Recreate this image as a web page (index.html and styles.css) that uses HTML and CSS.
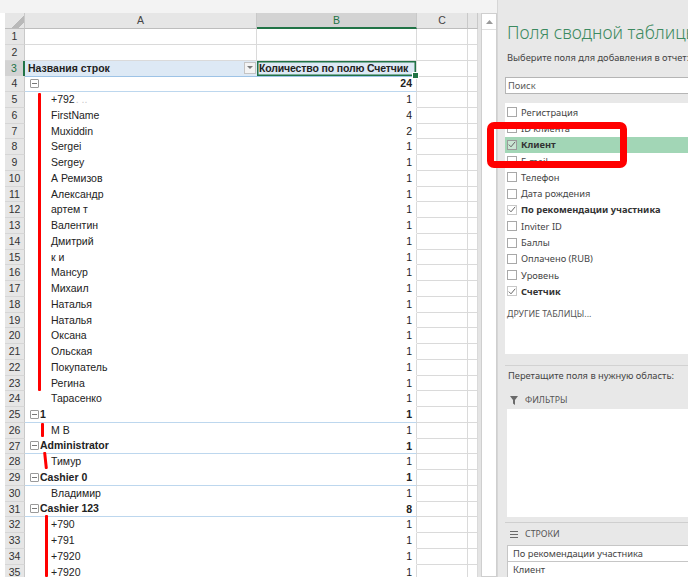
FILE: index.html
```html
<!DOCTYPE html>
<html lang="ru">
<head>
<meta charset="utf-8">
<title>Сводная таблица</title>
<link rel="stylesheet" href="styles.css">
</head>
<body>
<section class="sheet">
  <div class="topstrip"></div>
  <div class="sheetbody">
    <div class="grid">
      <div class="row hdr"><div class="corner"></div><div class="ch">A</div><div class="ch csel">B</div><div class="ch">C</div><div class="ch"></div></div>
      <div class="row"><div class="rh">1</div><div class="g"></div><div class="g"></div><div class="g"></div><div class="g"></div></div>
      <div class="row"><div class="rh">2</div><div class="g"></div><div class="g"></div><div class="g"></div><div class="g"></div></div>
      <div class="row"><div class="rh rsel">3</div><div class="pa ph">Названия строк<span class="dd"><svg width="6" height="4" viewBox="0 0 6 4"><path d="M0 0h6L3 3z" fill="#7a7a7a"/></svg></span></div><div class="pb ph bsel">Количество по полю Счетчик<span class="handle"></span></div><div class="g"></div><div class="g"></div></div>
      <div class="row"><div class="rh">4</div><div class="pa grp gl"><span class="tg"></span></div><div class="pb grp b">24</div><div class="g"></div><div class="g"></div></div>
      <div class="row"><div class="rh">5</div><div class="pa item">+792<span class="faint">. ..</span></div><div class="pb">1</div><div class="g"></div><div class="g"></div></div>
      <div class="row"><div class="rh">6</div><div class="pa item">FirstName</div><div class="pb">4</div><div class="g"></div><div class="g"></div></div>
      <div class="row"><div class="rh">7</div><div class="pa item">Muxiddin</div><div class="pb">2</div><div class="g"></div><div class="g"></div></div>
      <div class="row"><div class="rh">8</div><div class="pa item">Sergei</div><div class="pb">1</div><div class="g"></div><div class="g"></div></div>
      <div class="row"><div class="rh">9</div><div class="pa item">Sergey</div><div class="pb">1</div><div class="g"></div><div class="g"></div></div>
      <div class="row"><div class="rh">10</div><div class="pa item">А Ремизов</div><div class="pb">1</div><div class="g"></div><div class="g"></div></div>
      <div class="row"><div class="rh">11</div><div class="pa item">Александр</div><div class="pb">1</div><div class="g"></div><div class="g"></div></div>
      <div class="row"><div class="rh">12</div><div class="pa item">артем т</div><div class="pb">1</div><div class="g"></div><div class="g"></div></div>
      <div class="row"><div class="rh">13</div><div class="pa item">Валентин</div><div class="pb">1</div><div class="g"></div><div class="g"></div></div>
      <div class="row"><div class="rh">14</div><div class="pa item">Дмитрий</div><div class="pb">1</div><div class="g"></div><div class="g"></div></div>
      <div class="row"><div class="rh">15</div><div class="pa item">к и</div><div class="pb">1</div><div class="g"></div><div class="g"></div></div>
      <div class="row"><div class="rh">16</div><div class="pa item">Мансур</div><div class="pb">1</div><div class="g"></div><div class="g"></div></div>
      <div class="row"><div class="rh">17</div><div class="pa item">Михаил</div><div class="pb">1</div><div class="g"></div><div class="g"></div></div>
      <div class="row"><div class="rh">18</div><div class="pa item">Наталья</div><div class="pb">1</div><div class="g"></div><div class="g"></div></div>
      <div class="row"><div class="rh">19</div><div class="pa item">Наталья</div><div class="pb">1</div><div class="g"></div><div class="g"></div></div>
      <div class="row"><div class="rh">20</div><div class="pa item">Оксана</div><div class="pb">1</div><div class="g"></div><div class="g"></div></div>
      <div class="row"><div class="rh">21</div><div class="pa item">Ольская</div><div class="pb">1</div><div class="g"></div><div class="g"></div></div>
      <div class="row"><div class="rh">22</div><div class="pa item">Покупатель</div><div class="pb">1</div><div class="g"></div><div class="g"></div></div>
      <div class="row"><div class="rh">23</div><div class="pa item">Регина</div><div class="pb">1</div><div class="g"></div><div class="g"></div></div>
      <div class="row"><div class="rh">24</div><div class="pa item">Тарасенко</div><div class="pb">1</div><div class="g"></div><div class="g"></div></div>
      <div class="row"><div class="rh">25</div><div class="pa grp gl b"><span class="tg"></span>1</div><div class="pb grp b">1</div><div class="g"></div><div class="g"></div></div>
      <div class="row"><div class="rh">26</div><div class="pa item">М В</div><div class="pb">1</div><div class="g"></div><div class="g"></div></div>
      <div class="row"><div class="rh">27</div><div class="pa grp gl b"><span class="tg"></span>Administrator</div><div class="pb grp b">1</div><div class="g"></div><div class="g"></div></div>
      <div class="row"><div class="rh">28</div><div class="pa item">Тимур</div><div class="pb">1</div><div class="g"></div><div class="g"></div></div>
      <div class="row"><div class="rh">29</div><div class="pa grp gl b"><span class="tg"></span>Cashier 0</div><div class="pb grp b">1</div><div class="g"></div><div class="g"></div></div>
      <div class="row"><div class="rh">30</div><div class="pa item">Владимир</div><div class="pb">1</div><div class="g"></div><div class="g"></div></div>
      <div class="row"><div class="rh">31</div><div class="pa grp gl b"><span class="tg"></span>Cashier 123</div><div class="pb grp b">8</div><div class="g"></div><div class="g"></div></div>
      <div class="row"><div class="rh">32</div><div class="pa item">+790</div><div class="pb">1</div><div class="g"></div><div class="g"></div></div>
      <div class="row"><div class="rh">33</div><div class="pa item">+791</div><div class="pb">1</div><div class="g"></div><div class="g"></div></div>
      <div class="row"><div class="rh">34</div><div class="pa item">+7920</div><div class="pb">1</div><div class="g"></div><div class="g"></div></div>
      <div class="row"><div class="rh">35</div><div class="pa item">+7920</div><div class="pb">1</div><div class="g"></div><div class="g"></div></div>
    </div>
    <div class="gap"></div>
    <div class="vscroll"><div class="up"><svg width="7" height="4" viewBox="0 0 7 4"><path d="M0 4h7L3.5 0z" fill="#9a9a9a"/></svg></div></div>
  </div>
</section>

<aside class="panel">
  <h1 class="title">Поля сводной таблицы</h1>
  <p class="sub">Выберите поля для добавления в отчет:</p>
  <div class="search">Поиск</div>
  <div class="list">
    <div class="fi"><span class="cb"></span>Регистрация</div>
    <div class="fi"><span class="cb"></span>ID клиента</div>
    <div class="fi on hl"><span class="cb"><svg width="8" height="7" viewBox="0 0 8 7"><path d="M0.8 3.6 L3 5.8 L7.2 0.8" fill="none" stroke="#666" stroke-width="1"/></svg></span>Клиент</div>
    <div class="fi"><span class="cb"></span>E-mail</div>
    <div class="fi"><span class="cb"></span>Телефон</div>
    <div class="fi"><span class="cb"></span>Дата рождения</div>
    <div class="fi on"><span class="cb"><svg width="8" height="7" viewBox="0 0 8 7"><path d="M0.8 3.6 L3 5.8 L7.2 0.8" fill="none" stroke="#666" stroke-width="1"/></svg></span>По рекомендации участника</div>
    <div class="fi"><span class="cb"></span>Inviter ID</div>
    <div class="fi"><span class="cb"></span>Баллы</div>
    <div class="fi"><span class="cb"></span>Оплачено (RUB)</div>
    <div class="fi"><span class="cb"></span>Уровень</div>
    <div class="fi on"><span class="cb"><svg width="8" height="7" viewBox="0 0 8 7"><path d="M0.8 3.6 L3 5.8 L7.2 0.8" fill="none" stroke="#666" stroke-width="1"/></svg></span>Счетчик</div>
    <div class="other">ДРУГИЕ ТАБЛИЦЫ...</div>
  </div>
  <div class="sep"></div>
  <p class="drag">Перетащите поля в нужную область:</p>
  <div class="alabel"><svg width="8" height="9" viewBox="0 0 8 9"><path d="M0 0h8L5 4v5L3 7.5V4z" fill="#6a6a6a"/></svg>ФИЛЬТРЫ</div>
  <div class="abox"></div>
  <div class="sep2"></div>
  <div class="alabel rows"><svg width="8" height="7" viewBox="0 0 8 7"><path d="M0 0.5h8M0 3.5h8M0 6.5h8" stroke="#6a6a6a" stroke-width="1"/></svg>СТРОКИ</div>
  <div class="rbox">По рекомендации участника</div>
  <div class="rbox">Клиент</div>
</aside>

<div class="mark m1"></div>
<div class="mark m2"></div>
<div class="mark m3"></div>
<div class="mark m4"></div>
<div class="redbox"></div>
</body>
</html>
```

FILE: styles.css
```css
html, body {
  margin: 0;
  padding: 0;
}
body {
  width: 688px;
  height: 577px;
  overflow: hidden;
  position: relative;
  display: flex;
  background: #fff;
  font-family: "Liberation Sans", Arial, sans-serif;
  color: #222;
}

/* ---------- spreadsheet ---------- */
.sheet {
  width: 497px;
  flex: none;
  display: flex;
  flex-direction: column;
  overflow: hidden;
}
.topstrip {
  flex: none;
  height: 13px;
  background: #f3f3f3;
}
.sheetbody {
  flex: 1;
  min-height: 0;
  display: flex;
  overflow: hidden;
}
.grid {
  flex: none;
  width: 478px;
  padding-left: 5px;
  box-sizing: border-box;
  background: #fff;
}
.row {
  display: grid;
  grid-template-columns: 20px 232px 160px 51px 10px;
  height: 15.75px;
}
.row.hdr {
  height: 16px;
}
.row > div {
  box-sizing: border-box;
  font-size: 10.5px;
  line-height: 15px;
  white-space: nowrap;
  overflow: hidden;
}
.corner {
  background: #e6e6e6 linear-gradient(135deg, transparent 62%, #b9b9b9 62%, #b9b9b9 84%, transparent 84%);
  border-right: 1px solid #c9c9c9;
  border-bottom: 1px solid #bdbdbd;
}
.ch {
  background: #e6e6e6;
  color: #444;
  text-align: center;
  border-right: 1px solid #c9c9c9;
  border-bottom: 1px solid #bdbdbd;
  line-height: 15px !important;
}
.ch.csel {
  background: #d3d3d3;
  color: #217346;
  border-bottom: 2px solid #217346;
}
.rh {
  background: #e6e6e6;
  color: #333;
  text-align: center;
  border-right: 1px solid #c9c9c9;
  border-bottom: 1px solid #d6d6d6;
}
.rh.rsel {
  background: #d3d3d3;
  color: #217346;
  border-right: 2px solid #217346;
}
.g {
  border-right: 1px solid #dadada;
  border-bottom: 1px solid #dadada;
}
.pa {
  border-bottom: 1px solid transparent;
}
.pb {
  border-right: 1px solid #dadada;
  border-bottom: 1px solid transparent;
  text-align: right;
  padding-right: 4px;
}
.b {
  font-weight: bold;
}
.item {
  padding-left: 26px;
}
.faint {
  color: #c9c9c9;
  margin-left: 1px;
}
.gl {
  padding-left: 5px;
  display: flex;
  align-items: center;
}
.grp {
  border-bottom: 1px solid #bdd7ee !important;
}
.tg {
  position: relative;
  width: 7px;
  height: 7px;
  border: 1px solid #9a9a9a;
  border-radius: 1px;
  margin-right: 1px;
  flex: none;
  background: #fff;
}
.tg::after {
  content: "";
  position: absolute;
  left: 1px;
  right: 1px;
  top: 3px;
  height: 1px;
  background: #777;
}
.ph {
  background: #dde9f5;
  font-weight: bold;
  border-bottom: 1px solid #9dc3e6 !important;
}
.pa.ph {
  display: flex;
  align-items: center;
  padding-left: 3px;
}
.dd {
  margin-left: auto;
  margin-right: 1px;
  width: 12px;
  height: 12px;
  box-sizing: border-box;
  border: 1px solid #c4c4c4;
  background: #f4f4f4;
  display: flex;
  align-items: center;
  justify-content: center;
}
.pb.ph {
  text-align: left;
  padding-left: 2px;
  padding-right: 0;
  letter-spacing: -0.15px;
}
.bsel {
  position: relative;
  overflow: visible !important;
  box-shadow: inset 0 0 0 1.5px #217346;
}
.handle {
  position: absolute;
  right: -3px;
  bottom: -3px;
  width: 5px;
  height: 5px;
  background: #217346;
  border: 1px solid #fff;
  z-index: 2;
}
.gap {
  flex: none;
  width: 3px;
  background: #e4e4e4;
}
.vscroll {
  flex: none;
  width: 16px;
  box-sizing: border-box;
  border: 1px solid #cfcfcf;
  background: #fff;
}
.vscroll .up {
  height: 15px;
  border-bottom: 1px solid #e0e0e0;
  display: flex;
  align-items: center;
  justify-content: center;
}

/* ---------- pivot field panel ---------- */
.panel {
  flex: 1;
  min-width: 0;
  background: #e8e8e8;
  border-left: 1px solid #d6d6d6;
  padding-left: 7px;
  box-sizing: border-box;
  display: flex;
  flex-direction: column;
  overflow: hidden;
  font-family: "Noto Sans", "Open Sans", sans-serif;
  color: #444;
  font-size: 9.3px;
}
.panel > * {
  flex: none;
}
.title {
  margin: 21px 0 0 2px;
  height: 22px;
  line-height: 22px;
  font-size: 17.5px;
  font-weight: 300;
  color: #3c8a60;
  white-space: nowrap;
}
.sub {
  margin: 9px 0 0 2px;
  height: 12px;
  line-height: 12px;
  white-space: nowrap;
}
.search {
  margin-top: 13px;
  height: 17px;
  line-height: 15px;
  width: 200px;
  box-sizing: border-box;
  border: 1px solid #b5b5b5;
  background: #fff;
  padding-left: 2px;
  color: #5a5a5a;
}
.list {
  margin-top: 9px;
  height: 251px;
  width: 200px;
  box-sizing: border-box;
  background: #fff;
  padding-top: 1px;
}
.fi {
  height: 16.3px;
  display: flex;
  align-items: center;
  white-space: nowrap;
  color: #444;
}
.fi.on {
  font-weight: bold;
  color: #333;
}
.fi.hl {
  background: #a2d6b6;
}
.cb {
  width: 10px;
  height: 10px;
  box-sizing: border-box;
  border: 1px solid #a8a8a8;
  background: #fff;
  margin: 0 4px 0 2px;
  flex: none;
  display: flex;
  align-items: center;
  justify-content: center;
}
.fi.on .cb {
  border-color: #c8c8c8;
}
.fi.hl .cb {
  background: #c9e6d3;
  border-color: #9a9a9a;
}
.other {
  margin: 8px 0 0 2px;
  height: 12px;
  line-height: 12px;
  font-size: 8.8px;
  color: #555;
}
.sep {
  margin-top: 11px;
  height: 0;
  border-top: 1px solid #d2d2d2;
}
.drag {
  margin: 4px 0 0 3px;
  height: 12px;
  line-height: 12px;
  white-space: nowrap;
}
.alabel {
  margin: 12px 0 0 5px;
  height: 12px;
  line-height: 12px;
  display: flex;
  align-items: center;
  gap: 7px;
  font-size: 8.8px;
  color: #555;
}
.alabel.rows {
  margin-top: 5px;
}
.abox {
  margin: 3px 0 0 2px;
  height: 108px;
  width: 200px;
  background: #fff;
}
.sep2 {
  margin-top: 5px;
  height: 0;
  border-top: 1px solid #cfcfcf;
}
.rbox {
  margin: 5px 0 0 2px;
  height: 17px;
  width: 200px;
  box-sizing: border-box;
  border: 1px solid #c6c6c6;
  background: #fff;
  line-height: 15px;
  padding-left: 5px;
  white-space: nowrap;
  color: #444;
}
.rbox + .rbox {
  margin-top: -1px;
}

/* ---------- annotations (overlays) ---------- */
.mark {
  position: absolute;
  width: 3px;
  background: #f00;
  border-radius: 1px;
}
.m1 { left: 38px; top: 93px; height: 298px; }
.m2 { left: 41px; top: 423px; height: 14px; }
.m3 { left: 44px; top: 452px; height: 17px; transform: rotate(-6deg); }
.m4 { left: 45px; top: 515px; height: 62px; }
.redbox {
  position: absolute;
  left: 487px;
  top: 122px;
  width: 140px;
  height: 46px;
  box-sizing: border-box;
  border: 7px solid #f00;
  border-radius: 7px;
}
```
